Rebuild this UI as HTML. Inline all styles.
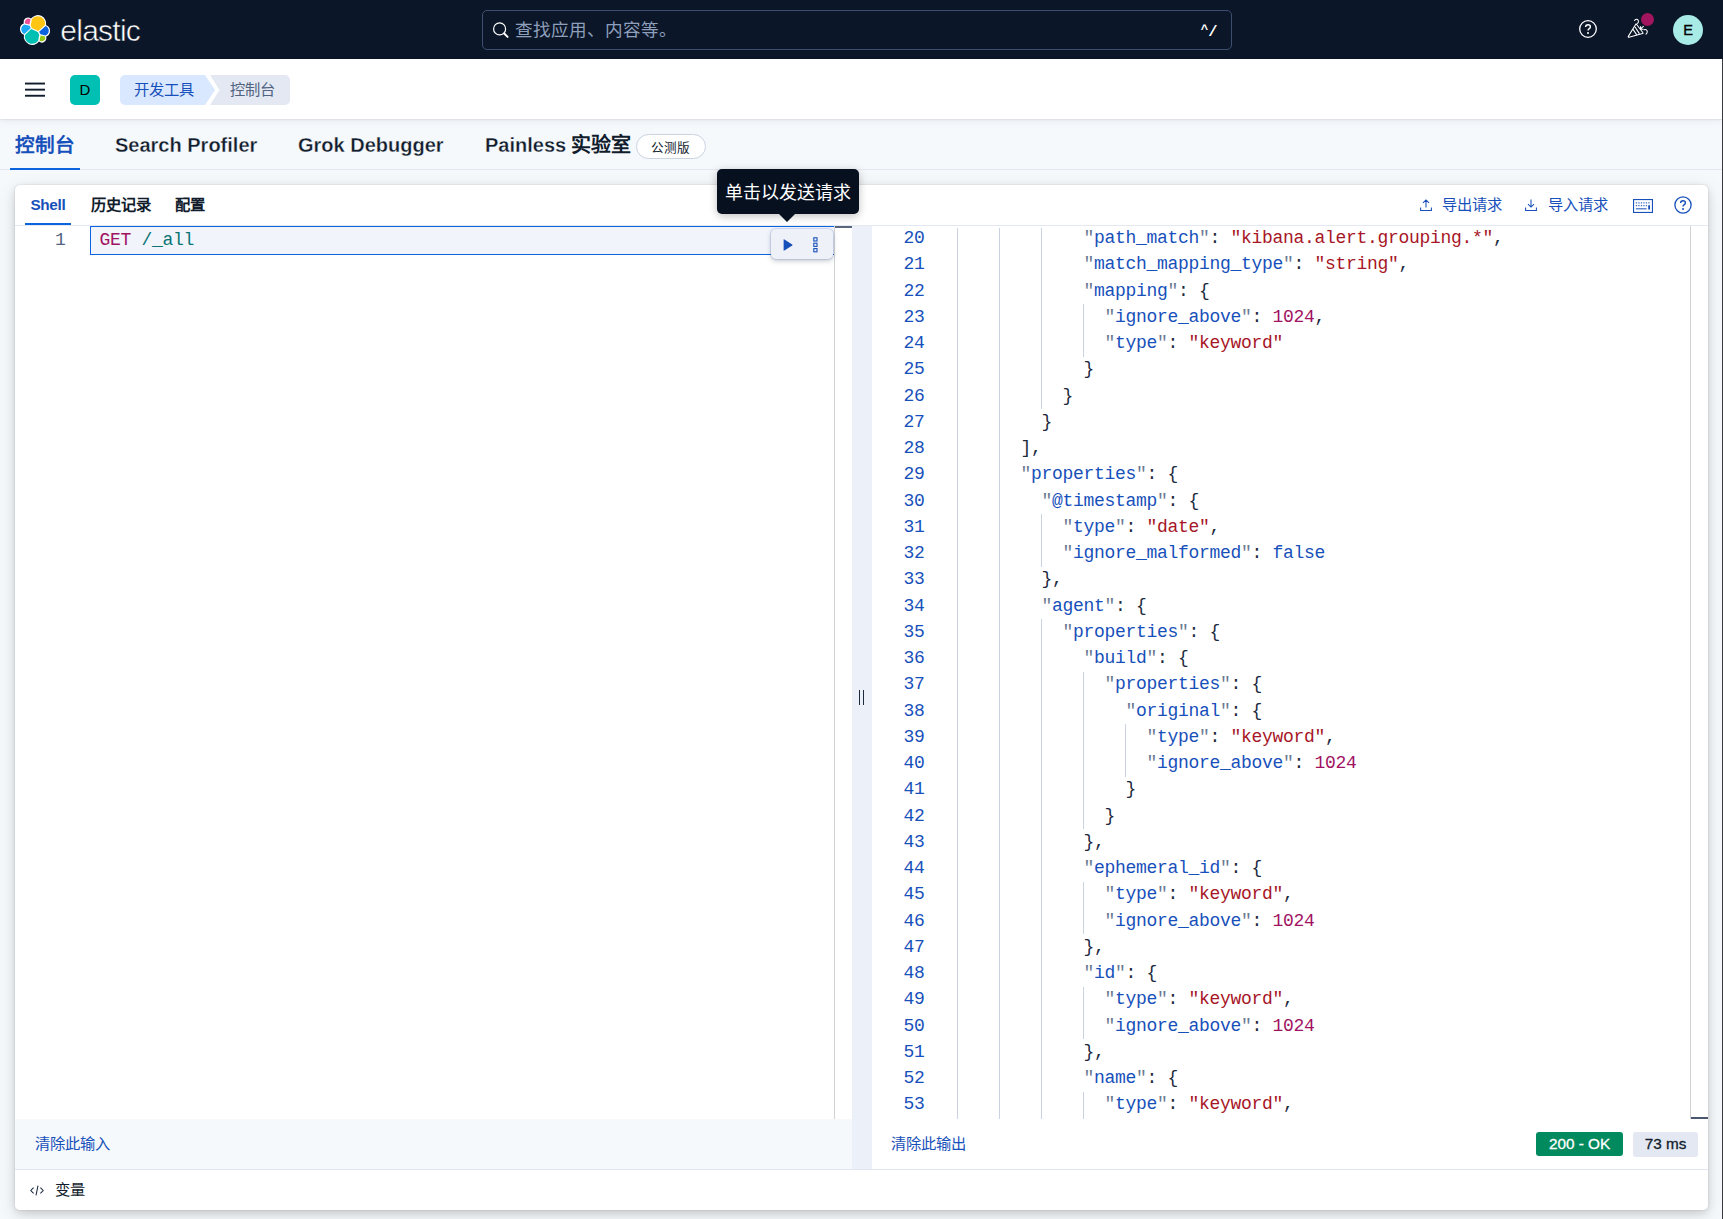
<!DOCTYPE html>
<html lang="zh-CN">
<head>
<meta charset="utf-8">
<title>控制台 - 开发工具 - Elastic</title>
<style>
*{box-sizing:border-box;margin:0;padding:0}
html,body{width:1723px;height:1219px;overflow:hidden}
body{position:relative;background:#f6f9fc;font-family:"Liberation Sans",sans-serif;color:#111c2c;font-size:17.5px}
.abs{position:absolute}
svg{position:absolute;overflow:visible}
.nw{white-space:nowrap}

/* ---------- top dark header ---------- */
#hdr1{position:absolute;left:0;top:0;width:1723px;height:59px;background:#0b1628}
#wordmark{position:absolute;left:60.3px;top:10.9px;height:40px;line-height:40px;font-size:30px;color:#fff;letter-spacing:-0.75px;white-space:nowrap;-webkit-text-stroke:0.55px #0b1628}
#search{position:absolute;left:482px;top:10px;width:750px;height:40px;border:1px solid #3d4f70;border-radius:5px;background:#0b1628}
#search .ph{position:absolute;left:32px;top:0;height:38px;line-height:39px;font-size:17.6px;color:#8e9fbc;white-space:nowrap;width:170px;overflow:hidden}
#search .kbd{position:absolute;right:14.5px;top:0;height:38px;line-height:42px;font-family:"Liberation Mono",monospace;font-size:15.5px;font-weight:bold;color:#fff;letter-spacing:-1px}
#search .kbd span{font-size:12.5px;position:relative;top:-3.5px;left:1.5px;margin-right:2.5px}
#avatarE{position:absolute;left:1672.8px;top:14.8px;width:30.4px;height:30.4px;border-radius:50%;background:#a8ebe6;color:#000;font-size:14.6px;line-height:30.4px;text-align:center;-webkit-text-stroke:0.35px #000}
#dot{position:absolute;left:1641.4px;top:13.3px;width:13.1px;height:13.1px;border-radius:50%;background:#a3155f}

/* ---------- second header ---------- */
#hdr2{position:absolute;left:0;top:59px;width:1723px;height:60.2px;background:#fff;box-shadow:0 0.5px 1.5px rgba(43,57,79,.16),0 2px 6px rgba(43,57,79,.08)}
#avatarD{position:absolute;left:70px;top:16px;width:30px;height:30px;border-radius:5px;background:#00bfb3;color:#000;font-size:15px;line-height:30px;text-align:center}
.crumb{position:absolute;top:16px;height:30px;line-height:29px;font-size:15.3px;white-space:nowrap;text-align:center;overflow:hidden}
#crumb1{left:120px;width:95px;color:#1750ba;background:#d9e8ff;border-radius:5px 0 0 5px;clip-path:polygon(0 0,85px 0,100% 50%,85px 100%,0 100%);padding-right:7px}
#crumb2{left:210px;width:80px;color:#516381;background:#e3e8f2;border-radius:0 5px 5px 0;clip-path:polygon(0 0,100% 0,100% 100%,0 100%,9.5px 50%);padding-left:4px}

/* ---------- app tabs ---------- */
#tabs{position:absolute;left:0;top:120px;width:1723px;height:50px;border-bottom:1px solid #e3e8f2}
.tab{position:absolute;top:0;height:50px;line-height:50px;font-size:20px;font-weight:bold;color:#111c2c;white-space:nowrap}
#tab1{left:15.3px;width:60px;color:#1750ba;overflow:visible;font-size:19.6px;line-height:51px}
#tab4{word-spacing:-0.6px}
#tab2,#tab3,#tab4{-webkit-text-stroke:0.3px #f6f9fc}
.cjk{-webkit-text-stroke:0 transparent}
#tab1u{position:absolute;left:10px;top:47.8px;width:70px;height:2.2px;background:#0b64dd}
#beta{position:absolute;left:635.5px;top:14px;width:70.5px;height:25px;border:1px solid #cad3e2;border-radius:13px;background:#fff;font-size:12.6px;font-weight:500;line-height:26px;text-align:center;color:#111c2c;white-space:nowrap}

/* ---------- main panel ---------- */
#panel{position:absolute;left:15px;top:185px;width:1693px;height:1025px;background:#fff;border-radius:5px;box-shadow:0 0 2px rgba(0,0,0,.14),0 3px 8px rgba(0,0,0,.13),0 5px 20px rgba(0,0,0,.10)}
#toolbar{position:absolute;left:0;top:0;width:1693px;height:41px;border-bottom:1px solid #e3e8f2}
.stab{position:absolute;top:0;height:38px;line-height:39px;font-size:15.3px;font-weight:bold;color:#111c2c;white-space:nowrap}
#stab1{left:15.5px;color:#1750ba;letter-spacing:-0.35px}
#stab1u{position:absolute;left:10px;top:37.5px;width:46px;height:2.5px;background:#0b64dd}
.tbtn{position:absolute;top:0;height:40px;line-height:39px;font-size:15.3px;font-weight:500;color:#1750ba;white-space:nowrap}

/* editors */
#ledit{position:absolute;left:0;top:41px;width:837px;height:893px;background:#fff;overflow:hidden}
#lfoot{position:absolute;left:0;top:934px;width:837px;height:50px;background:#f6f9fc}
#resizer{position:absolute;left:837px;top:41px;width:20px;height:943px;background:#ecf1f9}
#redit{position:absolute;left:857px;top:41px;width:836px;height:893px;background:#fff;overflow:hidden}
#rfoot{position:absolute;left:857px;top:934px;width:836px;height:50px;background:#fff}
#hline{position:absolute;left:0;top:984px;width:1693px;height:1px;background:#dfe5f1}
#vars{position:absolute;left:0;top:985px;width:1693px;height:40px;background:#fff;border-radius:0 0 5px 5px}
.foot-link{position:absolute;left:19.5px;font-weight:500;top:0;height:50px;line-height:49px;font-size:15.3px;color:#1750ba;white-space:nowrap}

.mono{font-family:"Liberation Mono",monospace;font-size:17.5px}
.ln{position:absolute;left:0;width:100%;height:26.25px;line-height:26.25px;font-family:"Liberation Mono",monospace;font-size:18px;letter-spacing:-0.302px;white-space:pre}
.ln .no{position:absolute;left:0;top:-0.4px;width:52.4px;text-align:right;color:#1750ba}
.ln .tx{position:absolute;top:-0.4px}
.ln .g{position:absolute;top:0;width:1px;height:26.25px;background:#cbd3e3}
.q{color:#6b7a93}.k{color:#1750ba}.p{color:#1d2a3e}.s{color:#a71627}.n{color:#a11262}.b{color:#1750ba}

#tip{position:absolute;left:717px;top:169px;width:142px;height:45px;background:#07101f;border-radius:5px;color:#fff;font-size:18px;font-weight:500;line-height:48px;text-align:center;white-space:nowrap;box-shadow:0 2px 8px rgba(0,0,0,.25)}
#tiparrow{position:absolute;left:778.5px;top:213.5px;width:0;height:0;border-left:8px solid transparent;border-right:8px solid transparent;border-top:8.5px solid #07101f}
#actions{position:absolute;left:771px;top:228.5px;width:61.5px;height:30.5px;background:#eef2f8;border-radius:5px;box-shadow:0 0 0 1px rgba(60,100,190,.16),0 2px 5px rgba(43,57,79,.28)}
.badge{-webkit-text-stroke:0.3px currentColor;position:absolute;top:1132px;height:25px;line-height:24px;font-size:15.3px;border-radius:3px;text-align:center;white-space:nowrap}
</style>
</head>
<body>

<!-- ================= dark header ================= -->
<div id="hdr1">
  <svg style="left:20px;top:15px" width="30" height="30" viewBox="0 0 32 32">
    <path fill="#fff" d="M32 16.77a6.334 6.334 0 00-1.14-3.63 6.269 6.269 0 00-3.02-2.3 9.044 9.044 0 00-.9-5.88 8.999 8.999 0 00-4.33-4.03 9.015 9.015 0 00-5.9-.52 9.019 9.019 0 00-4.95 3.27 4.938 4.938 0 00-5.86-.1 4.943 4.943 0 00-1.79 2.41 4.93 4.93 0 00-.02 3 6.36 6.36 0 00-3.02 2.33A6.336 6.336 0 000 15.23c0 1.3.4 2.58 1.15 3.64a6.285 6.285 0 003.03 2.31 8.994 8.994 0 00.9 5.87 9.01 9.01 0 004.33 4.03 8.968 8.968 0 005.89.52 8.966 8.966 0 004.95-3.25 4.91 4.91 0 005.85.1 4.936 4.936 0 001.8-2.4 4.936 4.936 0 00.03-3 6.38 6.38 0 003-2.33A6.348 6.348 0 0032 16.77"/>
    <path fill="#fec514" d="M12.58 13.787l7.002 3.211 7.066-6.213a7.849 7.849 0 00.152-1.557c0-4.287-3.472-7.763-7.755-7.763a7.757 7.757 0 00-6.407 3.386l-1.175 6.122 1.117 2.814z"/>
    <path fill="#00bfb3" d="M5.333 21.215A7.906 7.906 0 005.18 22.8c0 4.3 3.497 7.795 7.795 7.795a7.773 7.773 0 006.427-3.409l1.166-6.077-1.556-2.975-7.03-3.205-6.65 6.285z"/>
    <path fill="#f04e98" d="M5.293 9.07l4.797 1.134L11.14 4.75a3.779 3.779 0 00-5.848 4.32"/>
    <path fill="#1ba9f5" d="M4.877 10.214c-2.105.693-3.577 2.72-3.577 4.982 0 2.2 1.36 4.166 3.405 4.943l6.73-6.087-1.236-2.64-5.322-1.198z"/>
    <path fill="#93c90e" d="M20.87 27.183a3.771 3.771 0 005.863-4.294l-4.795-1.122-1.068 5.416z"/>
    <path fill="#0b64dd" d="M21.845 20.512l5.28 1.235c2.145-.707 3.619-2.733 3.619-4.997 0-2.195-1.364-4.16-3.41-4.937l-6.907 6.055 1.418 2.644z"/>
  </svg>
  <div id="wordmark">elastic</div>

  <div id="search">
    <svg style="left:10px;top:11px" width="18" height="18" viewBox="0 0 18 18" fill="none" stroke="#fff" stroke-width="1.2">
      <circle cx="6.6" cy="6.9" r="6"/><path d="M11.2 11.5 L14.6 14.9" stroke-width="2" stroke-linecap="round"/>
    </svg>
    <div class="ph">查找应用、内容等。</div>
    <div class="kbd"><span>^</span>/</div>
  </div>

  <!-- help -->
  <svg style="left:1579px;top:20px" width="18" height="18" viewBox="0 0 18 18" fill="none" stroke="#fff">
    <circle cx="9" cy="9" r="8.3" stroke-width="1.3"/>
    <path d="M6.6 7.1 C6.6 5.6 7.7 4.8 9 4.8 C10.4 4.8 11.4 5.7 11.4 6.9 C11.4 8.6 9 8.7 9 10.6" stroke-width="1.4"/>
    <circle cx="9" cy="12.9" r="1" fill="#fff" stroke="none"/>
  </svg>
  <!-- cheer -->
  <svg style="left:1627px;top:18px" width="22" height="21" viewBox="0 0 22 21" fill="none" stroke="#fff" stroke-width="1.05" stroke-linejoin="round" stroke-linecap="round">
    <path d="M9.1 5.8 L1.3 18.4 Q1 19.4 2 19.2 L15.6 15.6 Q16.4 15.2 15.8 14.5 Z"/>
    <path d="M6.2 11.6 L9.6 16.6 M8.2 9.2 L12.2 15.4"/>
    <path d="M7.6 2.5 C8.3 1.1 10.4 0.9 11.2 2.3 C11.7 3.3 11.4 4.6 10.6 5.5"/>
    <path d="M17 11.8 C18.4 11 20.2 11.8 20.3 13.6 C20.3 14.8 19.8 15.6 19 16.2"/>
    <path d="M13.4 11.2 L16.4 8.4 M13.6 8.6 L13.4 11.2 L16 11.2"/>
  </svg>
  <div id="dot"></div>
  <div id="avatarE">E</div>
</div>

<!-- ================= second header ================= -->
<div id="hdr2">
  <svg style="left:25px;top:22.5px" width="20" height="16" viewBox="0 0 20 16">
    <rect x="0" y="0.6" width="20" height="1.9" fill="#111c2c"/><rect x="0" y="6.7" width="20" height="1.9" fill="#111c2c"/><rect x="0" y="12.8" width="20" height="1.9" fill="#111c2c"/>
  </svg>
  <div id="avatarD">D</div>
  <div class="crumb" id="crumb1">开发工具</div>
  <div class="crumb" id="crumb2">控制台</div>
</div>

<!-- ================= app tabs ================= -->
<div id="tabs">
  <div class="tab" id="tab1">控制台</div>
  <div id="tab1u"></div>
  <div class="tab" id="tab2" style="left:115px">Search Profiler</div>
  <div class="tab" id="tab3" style="left:298px">Grok Debugger</div>
  <div class="tab" id="tab4" style="left:485px">Painless <span class="cjk">实验室</span></div>
  <div id="beta">公测版</div>
</div>

<!-- ================= main panel ================= -->
<div id="panel">
  <div id="toolbar">
    <div class="stab" id="stab1">Shell</div>
    <div id="stab1u"></div>
    <div class="stab" id="stab2" style="left:75.5px">历史记录</div>
    <div class="stab" id="stab3" style="left:160px">配置</div>

    <!-- export -->
    <svg style="left:1404.5px;top:14.3px" width="12" height="12" viewBox="0 0 12 12" fill="none" stroke="#1750ba" stroke-width="1.05">
      <path d="M6 8.4 V1 M3 3.9 L6 0.9 L9 3.9 M0.6 8.4 V11.4 H11.4 V8.4"/>
    </svg>
    <div class="tbtn" style="left:1427.3px">导出请求</div>
    <!-- import -->
    <svg style="left:1510px;top:14.3px" width="12" height="12" viewBox="0 0 12 12" fill="none" stroke="#1750ba" stroke-width="1.05">
      <path d="M6 0.6 V8 M3 5.1 L6 8.1 L9 5.1 M0.6 8.4 V11.4 H11.4 V8.4"/>
    </svg>
    <div class="tbtn" style="left:1532.8px">导入请求</div>
    <!-- keyboard -->
    <svg style="left:1618px;top:13.5px" width="20" height="14" viewBox="0 0 20 14" fill="none" stroke="#1750ba">
      <rect x="0.55" y="0.55" width="18.9" height="12.9" stroke-width="1.1"/>
      <path d="M2.8 3.9 H17.2 M2.8 6.6 H14" stroke-width="1.3" stroke-dasharray="1.3 1.2" opacity=".85"/>
      <path d="M2.8 9.8 H13.6" stroke-width="1.2" opacity=".85"/>
      <path d="M16.1 6.2 V10.4" stroke-width="1.8"/>
    </svg>
    <!-- help -->
    <svg style="left:1659px;top:11px" width="18" height="18" viewBox="0 0 18 18" fill="none" stroke="#1750ba">
      <circle cx="9" cy="9" r="8.1" stroke-width="1.3"/>
      <path d="M6.6 7.1 C6.6 5.6 7.7 4.8 9 4.8 C10.4 4.8 11.4 5.7 11.4 6.9 C11.4 8.6 9 8.7 9 10.6" stroke-width="1.4"/>
      <circle cx="9" cy="12.9" r="1" fill="#1750ba" stroke="none"/>
    </svg>
  </div>

  <!-- left editor -->
  <div id="ledit">
    <div class="abs" style="left:75px;top:0.2px;width:745px;height:29px;border:1.2px solid #0b64dd;background:#f1f4fb"></div>
    <div class="ln" style="top:1.5px"><span class="no" style="width:50.5px;color:#516381">1</span><span class="tx" style="left:84.5px"><span class="n">GET</span> <span style="color:#0a7474">/_all</span></span></div>
    <div class="abs" style="left:819px;top:0;width:1px;height:893px;background:#d3d3d3"></div>
    <div class="abs" style="left:820px;top:0;width:16.5px;height:2px;background:#5a667b"></div>
  </div>
  <div id="lfoot"><div class="foot-link">清除此输入</div></div>

  <div id="resizer">
    <div class="abs" style="left:6.8px;top:464px;width:1.3px;height:15px;background:#1d2a3e"></div>
    <div class="abs" style="left:11.1px;top:464px;width:1.3px;height:15px;background:#1d2a3e"></div>
  </div>

  <!-- right editor -->
  <div id="redit">
<div class="ln" style="top:-0.60px"><span class="no">20</span><i class="g" style="left:85.0px"></i><i class="g" style="left:127.0px"></i><i class="g" style="left:169.0px"></i><span class="tx q" style="left:211.5px">&quot;</span><span class="tx k" style="left:222.0px">path_match</span><span class="tx q" style="left:327.0px">&quot;</span><span class="tx p" style="left:337.5px">: </span><span class="tx s" style="left:358.5px">&quot;kibana.alert.grouping.*&quot;</span><span class="tx p" style="left:621.0px">,</span></div>
<div class="ln" style="top:25.65px"><span class="no">21</span><i class="g" style="left:85.0px"></i><i class="g" style="left:127.0px"></i><i class="g" style="left:169.0px"></i><span class="tx q" style="left:211.5px">&quot;</span><span class="tx k" style="left:222.0px">match_mapping_type</span><span class="tx q" style="left:411.0px">&quot;</span><span class="tx p" style="left:421.5px">: </span><span class="tx s" style="left:442.5px">&quot;string&quot;</span><span class="tx p" style="left:526.5px">,</span></div>
<div class="ln" style="top:51.90px"><span class="no">22</span><i class="g" style="left:85.0px"></i><i class="g" style="left:127.0px"></i><i class="g" style="left:169.0px"></i><span class="tx q" style="left:211.5px">&quot;</span><span class="tx k" style="left:222.0px">mapping</span><span class="tx q" style="left:295.5px">&quot;</span><span class="tx p" style="left:306.0px">: {</span></div>
<div class="ln" style="top:78.15px"><span class="no">23</span><i class="g" style="left:85.0px"></i><i class="g" style="left:127.0px"></i><i class="g" style="left:169.0px"></i><i class="g" style="left:211.0px"></i><span class="tx q" style="left:232.5px">&quot;</span><span class="tx k" style="left:243.0px">ignore_above</span><span class="tx q" style="left:369.0px">&quot;</span><span class="tx p" style="left:379.5px">: </span><span class="tx n" style="left:400.5px">1024</span><span class="tx p" style="left:442.5px">,</span></div>
<div class="ln" style="top:104.40px"><span class="no">24</span><i class="g" style="left:85.0px"></i><i class="g" style="left:127.0px"></i><i class="g" style="left:169.0px"></i><i class="g" style="left:211.0px"></i><span class="tx q" style="left:232.5px">&quot;</span><span class="tx k" style="left:243.0px">type</span><span class="tx q" style="left:285.0px">&quot;</span><span class="tx p" style="left:295.5px">: </span><span class="tx s" style="left:316.5px">&quot;keyword&quot;</span></div>
<div class="ln" style="top:130.65px"><span class="no">25</span><i class="g" style="left:85.0px"></i><i class="g" style="left:127.0px"></i><i class="g" style="left:169.0px"></i><span class="tx p" style="left:211.5px">}</span></div>
<div class="ln" style="top:156.90px"><span class="no">26</span><i class="g" style="left:85.0px"></i><i class="g" style="left:127.0px"></i><i class="g" style="left:169.0px"></i><span class="tx p" style="left:190.5px">}</span></div>
<div class="ln" style="top:183.15px"><span class="no">27</span><i class="g" style="left:85.0px"></i><i class="g" style="left:127.0px"></i><span class="tx p" style="left:169.5px">}</span></div>
<div class="ln" style="top:209.40px"><span class="no">28</span><i class="g" style="left:85.0px"></i><i class="g" style="left:127.0px"></i><span class="tx p" style="left:148.5px">],</span></div>
<div class="ln" style="top:235.65px"><span class="no">29</span><i class="g" style="left:85.0px"></i><i class="g" style="left:127.0px"></i><span class="tx q" style="left:148.5px">&quot;</span><span class="tx k" style="left:159.0px">properties</span><span class="tx q" style="left:264.0px">&quot;</span><span class="tx p" style="left:274.5px">: {</span></div>
<div class="ln" style="top:261.90px"><span class="no">30</span><i class="g" style="left:85.0px"></i><i class="g" style="left:127.0px"></i><span class="tx q" style="left:169.5px">&quot;</span><span class="tx k" style="left:180.0px">@timestamp</span><span class="tx q" style="left:285.0px">&quot;</span><span class="tx p" style="left:295.5px">: {</span></div>
<div class="ln" style="top:288.15px"><span class="no">31</span><i class="g" style="left:85.0px"></i><i class="g" style="left:127.0px"></i><i class="g" style="left:169.0px"></i><span class="tx q" style="left:190.5px">&quot;</span><span class="tx k" style="left:201.0px">type</span><span class="tx q" style="left:243.0px">&quot;</span><span class="tx p" style="left:253.5px">: </span><span class="tx s" style="left:274.5px">&quot;date&quot;</span><span class="tx p" style="left:337.5px">,</span></div>
<div class="ln" style="top:314.40px"><span class="no">32</span><i class="g" style="left:85.0px"></i><i class="g" style="left:127.0px"></i><i class="g" style="left:169.0px"></i><span class="tx q" style="left:190.5px">&quot;</span><span class="tx k" style="left:201.0px">ignore_malformed</span><span class="tx q" style="left:369.0px">&quot;</span><span class="tx p" style="left:379.5px">: </span><span class="tx b" style="left:400.5px">false</span></div>
<div class="ln" style="top:340.65px"><span class="no">33</span><i class="g" style="left:85.0px"></i><i class="g" style="left:127.0px"></i><span class="tx p" style="left:169.5px">},</span></div>
<div class="ln" style="top:366.90px"><span class="no">34</span><i class="g" style="left:85.0px"></i><i class="g" style="left:127.0px"></i><span class="tx q" style="left:169.5px">&quot;</span><span class="tx k" style="left:180.0px">agent</span><span class="tx q" style="left:232.5px">&quot;</span><span class="tx p" style="left:243.0px">: {</span></div>
<div class="ln" style="top:393.15px"><span class="no">35</span><i class="g" style="left:85.0px"></i><i class="g" style="left:127.0px"></i><i class="g" style="left:169.0px"></i><span class="tx q" style="left:190.5px">&quot;</span><span class="tx k" style="left:201.0px">properties</span><span class="tx q" style="left:306.0px">&quot;</span><span class="tx p" style="left:316.5px">: {</span></div>
<div class="ln" style="top:419.40px"><span class="no">36</span><i class="g" style="left:85.0px"></i><i class="g" style="left:127.0px"></i><i class="g" style="left:169.0px"></i><span class="tx q" style="left:211.5px">&quot;</span><span class="tx k" style="left:222.0px">build</span><span class="tx q" style="left:274.5px">&quot;</span><span class="tx p" style="left:285.0px">: {</span></div>
<div class="ln" style="top:445.65px"><span class="no">37</span><i class="g" style="left:85.0px"></i><i class="g" style="left:127.0px"></i><i class="g" style="left:169.0px"></i><i class="g" style="left:211.0px"></i><span class="tx q" style="left:232.5px">&quot;</span><span class="tx k" style="left:243.0px">properties</span><span class="tx q" style="left:348.0px">&quot;</span><span class="tx p" style="left:358.5px">: {</span></div>
<div class="ln" style="top:471.90px"><span class="no">38</span><i class="g" style="left:85.0px"></i><i class="g" style="left:127.0px"></i><i class="g" style="left:169.0px"></i><i class="g" style="left:211.0px"></i><span class="tx q" style="left:253.5px">&quot;</span><span class="tx k" style="left:264.0px">original</span><span class="tx q" style="left:348.0px">&quot;</span><span class="tx p" style="left:358.5px">: {</span></div>
<div class="ln" style="top:498.15px"><span class="no">39</span><i class="g" style="left:85.0px"></i><i class="g" style="left:127.0px"></i><i class="g" style="left:169.0px"></i><i class="g" style="left:211.0px"></i><i class="g" style="left:253.0px"></i><span class="tx q" style="left:274.5px">&quot;</span><span class="tx k" style="left:285.0px">type</span><span class="tx q" style="left:327.0px">&quot;</span><span class="tx p" style="left:337.5px">: </span><span class="tx s" style="left:358.5px">&quot;keyword&quot;</span><span class="tx p" style="left:453.0px">,</span></div>
<div class="ln" style="top:524.40px"><span class="no">40</span><i class="g" style="left:85.0px"></i><i class="g" style="left:127.0px"></i><i class="g" style="left:169.0px"></i><i class="g" style="left:211.0px"></i><i class="g" style="left:253.0px"></i><span class="tx q" style="left:274.5px">&quot;</span><span class="tx k" style="left:285.0px">ignore_above</span><span class="tx q" style="left:411.0px">&quot;</span><span class="tx p" style="left:421.5px">: </span><span class="tx n" style="left:442.5px">1024</span></div>
<div class="ln" style="top:550.65px"><span class="no">41</span><i class="g" style="left:85.0px"></i><i class="g" style="left:127.0px"></i><i class="g" style="left:169.0px"></i><i class="g" style="left:211.0px"></i><span class="tx p" style="left:253.5px">}</span></div>
<div class="ln" style="top:576.90px"><span class="no">42</span><i class="g" style="left:85.0px"></i><i class="g" style="left:127.0px"></i><i class="g" style="left:169.0px"></i><i class="g" style="left:211.0px"></i><span class="tx p" style="left:232.5px">}</span></div>
<div class="ln" style="top:603.15px"><span class="no">43</span><i class="g" style="left:85.0px"></i><i class="g" style="left:127.0px"></i><i class="g" style="left:169.0px"></i><span class="tx p" style="left:211.5px">},</span></div>
<div class="ln" style="top:629.40px"><span class="no">44</span><i class="g" style="left:85.0px"></i><i class="g" style="left:127.0px"></i><i class="g" style="left:169.0px"></i><span class="tx q" style="left:211.5px">&quot;</span><span class="tx k" style="left:222.0px">ephemeral_id</span><span class="tx q" style="left:348.0px">&quot;</span><span class="tx p" style="left:358.5px">: {</span></div>
<div class="ln" style="top:655.65px"><span class="no">45</span><i class="g" style="left:85.0px"></i><i class="g" style="left:127.0px"></i><i class="g" style="left:169.0px"></i><i class="g" style="left:211.0px"></i><span class="tx q" style="left:232.5px">&quot;</span><span class="tx k" style="left:243.0px">type</span><span class="tx q" style="left:285.0px">&quot;</span><span class="tx p" style="left:295.5px">: </span><span class="tx s" style="left:316.5px">&quot;keyword&quot;</span><span class="tx p" style="left:411.0px">,</span></div>
<div class="ln" style="top:681.90px"><span class="no">46</span><i class="g" style="left:85.0px"></i><i class="g" style="left:127.0px"></i><i class="g" style="left:169.0px"></i><i class="g" style="left:211.0px"></i><span class="tx q" style="left:232.5px">&quot;</span><span class="tx k" style="left:243.0px">ignore_above</span><span class="tx q" style="left:369.0px">&quot;</span><span class="tx p" style="left:379.5px">: </span><span class="tx n" style="left:400.5px">1024</span></div>
<div class="ln" style="top:708.15px"><span class="no">47</span><i class="g" style="left:85.0px"></i><i class="g" style="left:127.0px"></i><i class="g" style="left:169.0px"></i><span class="tx p" style="left:211.5px">},</span></div>
<div class="ln" style="top:734.40px"><span class="no">48</span><i class="g" style="left:85.0px"></i><i class="g" style="left:127.0px"></i><i class="g" style="left:169.0px"></i><span class="tx q" style="left:211.5px">&quot;</span><span class="tx k" style="left:222.0px">id</span><span class="tx q" style="left:243.0px">&quot;</span><span class="tx p" style="left:253.5px">: {</span></div>
<div class="ln" style="top:760.65px"><span class="no">49</span><i class="g" style="left:85.0px"></i><i class="g" style="left:127.0px"></i><i class="g" style="left:169.0px"></i><i class="g" style="left:211.0px"></i><span class="tx q" style="left:232.5px">&quot;</span><span class="tx k" style="left:243.0px">type</span><span class="tx q" style="left:285.0px">&quot;</span><span class="tx p" style="left:295.5px">: </span><span class="tx s" style="left:316.5px">&quot;keyword&quot;</span><span class="tx p" style="left:411.0px">,</span></div>
<div class="ln" style="top:786.90px"><span class="no">50</span><i class="g" style="left:85.0px"></i><i class="g" style="left:127.0px"></i><i class="g" style="left:169.0px"></i><i class="g" style="left:211.0px"></i><span class="tx q" style="left:232.5px">&quot;</span><span class="tx k" style="left:243.0px">ignore_above</span><span class="tx q" style="left:369.0px">&quot;</span><span class="tx p" style="left:379.5px">: </span><span class="tx n" style="left:400.5px">1024</span></div>
<div class="ln" style="top:813.15px"><span class="no">51</span><i class="g" style="left:85.0px"></i><i class="g" style="left:127.0px"></i><i class="g" style="left:169.0px"></i><span class="tx p" style="left:211.5px">},</span></div>
<div class="ln" style="top:839.40px"><span class="no">52</span><i class="g" style="left:85.0px"></i><i class="g" style="left:127.0px"></i><i class="g" style="left:169.0px"></i><span class="tx q" style="left:211.5px">&quot;</span><span class="tx k" style="left:222.0px">name</span><span class="tx q" style="left:264.0px">&quot;</span><span class="tx p" style="left:274.5px">: {</span></div>
<div class="ln" style="top:865.65px"><span class="no">53</span><i class="g" style="left:85.0px"></i><i class="g" style="left:127.0px"></i><i class="g" style="left:169.0px"></i><i class="g" style="left:211.0px"></i><span class="tx q" style="left:232.5px">&quot;</span><span class="tx k" style="left:243.0px">type</span><span class="tx q" style="left:285.0px">&quot;</span><span class="tx p" style="left:295.5px">: </span><span class="tx s" style="left:316.5px">&quot;keyword&quot;</span><span class="tx p" style="left:411.0px">,</span></div>
<div class="ln" style="top:891.90px"><span class="no">54</span><i class="g" style="left:85.0px"></i><i class="g" style="left:127.0px"></i><i class="g" style="left:169.0px"></i><i class="g" style="left:211.0px"></i><span class="tx q" style="left:232.5px">&quot;</span><span class="tx k" style="left:243.0px">ignore_above</span><span class="tx q" style="left:369.0px">&quot;</span><span class="tx p" style="left:379.5px">: </span><span class="tx n" style="left:400.5px">1024</span></div>
    <div class="abs" style="left:0;top:0;width:818px;height:2.3px;background:#fff"></div>
    <div class="abs" style="left:818px;top:0;width:1px;height:893px;background:#d3d3d3"></div>
    <div class="abs" style="left:819px;top:890.5px;width:17.5px;height:2.5px;background:#4a576e"></div>
  </div>
  <div id="rfoot"><div class="foot-link" style="left:19px">清除此输出</div></div>

  <div id="hline"></div>
  <div id="vars">
    <svg style="left:15.2px;top:13.5px" width="14" height="13" viewBox="0 0 14 13" fill="none" stroke="#1d2a3e" stroke-width="1.05">
      <path d="M3.6 3.6 L0.8 6.5 L3.6 9.4 M10.4 3.6 L13.2 6.5 L10.4 9.4 M8 1.6 L6 11.4"/>
    </svg>
    <div class="abs nw" style="left:39.5px;top:0;height:40px;line-height:39px;font-size:15.3px;font-weight:500;color:#111c2c">变量</div>
  </div>
</div>

<!-- badges -->
<div class="badge" style="left:1536px;width:87px;height:24px;line-height:23.5px;background:#008a5e;color:#fff;font-weight:500">200 - OK</div>
<div class="badge" style="left:1633px;width:65px;background:#e3e8f2;color:#111c2c;font-weight:500">73 ms</div>

<!-- tooltip + action panel -->
<div id="tip">单击以发送请求</div>
<div id="tiparrow"></div>
<div id="actions">
  <svg style="left:12px;top:10px" width="10" height="12" viewBox="0 0 10 12"><path d="M0.6 0.8 Q0.6 0 1.4 0.4 L9.2 5.4 Q9.9 6 9.2 6.6 L1.4 11.6 Q0.6 12 0.6 11.2 Z" fill="#1750ba"/></svg>
  <svg style="left:42px;top:8.5px" width="5" height="16" viewBox="0 0 5 16" fill="none" stroke="#1750ba" stroke-width="1.1">
    <rect x="0.8" y="0.8" width="3.2" height="3.2"/><rect x="0.8" y="6.2" width="3.2" height="3.2"/><rect x="0.8" y="11.6" width="3.2" height="3.2"/>
  </svg>
</div>

<!-- right window edge -->
<div class="abs" style="left:1721.7px;top:59px;width:1.3px;height:1160px;background:#37393e"></div>

</body>
</html>
